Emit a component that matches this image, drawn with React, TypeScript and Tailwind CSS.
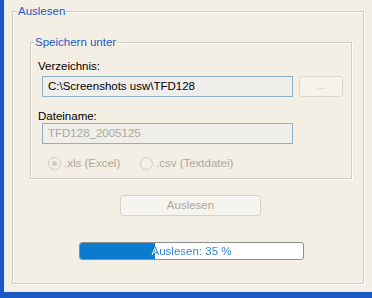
export default function App() {
  return (
    <div className="w-[372px] h-[298px] overflow-hidden bg-[#f4efe4] border-l-4 border-b-[6px] border-[#1a58c4] shadow-[inset_1px_-1px_0_#dfe6f2] pt-[5px] pl-[8px] font-['Liberation_Sans',Arial,sans-serif] text-[11.5px] leading-[13px] text-black">
      <fieldset className="w-[352px] h-[279px] border border-[#d0ccbf] shadow-[inset_1px_1px_0_#fff,1px_1px_0_#fff] p-0">
        <legend className="ml-[4px] px-[1px] bg-[#f4efe4] text-[#1d5bc6]">
          Auslesen
        </legend>

        <div className="pl-[17px]">
          <fieldset className="w-[322px] h-[143px] mt-[18px] border border-[#d0ccbf] shadow-[inset_1px_1px_0_#fff,1px_1px_0_#fff] p-0">
            <legend className="ml-[3px] px-[1px] bg-[#f4efe4] text-[#1d5bc6]">
              Speichern unter
            </legend>

            <div className="pl-[7px] pt-[11px]">
              <div>Verzeichnis:</div>
              <div className="flex mt-[3px] ml-[4px]">
                <div className="w-[251px] h-[21px] border border-[#8fb0c9] bg-[#efeeea] pl-[5px] flex items-center">
                  C:\Screenshots usw\TFD128
                </div>
                <div className="w-[44px] h-[21px] ml-[6px] rounded-[3px] border border-[#dcd8cb] bg-[#f5f3ec] text-[#c8c4b8] flex items-center justify-center pb-[3px]">
                  ...
                </div>
              </div>

              <div className="mt-[13px]">Dateiname:</div>
              <div className="w-[251px] h-[21px] ml-[4px] border border-[#8fb0c9] bg-[#efeeea] pl-[5px] flex items-center text-[#aca899]">
                TFD128_2005125
              </div>

              <div className="flex items-center mt-[13px] ml-[10px] text-[#aca899]">
                <div className="w-[92px] flex items-center">
                  <span className="w-[13px] h-[13px] rounded-full border border-[#cfccc0] bg-[#f3f1ea] flex items-center justify-center">
                    <span className="w-[5px] h-[5px] rounded-full bg-[#cfccc0]" />
                  </span>
                  <span className="ml-[3px]">.xls (Excel)</span>
                </div>
                <div className="flex items-center">
                  <span className="w-[13px] h-[13px] rounded-full border border-[#cfccc0] bg-[#f3f1ea]" />
                  <span className="ml-[3px]">.csv (Textdatei)</span>
                </div>
              </div>
            </div>
          </fieldset>

          <div className="w-[141px] h-[21px] mt-[16px] ml-[90px] rounded-[3px] border border-[#d6d2c4] bg-[#f6f4ee] text-[#aca899] flex items-center justify-center">
            Auslesen
          </div>

          <div className="relative w-[225px] h-[18px] mt-[26px] ml-[49px] rounded-[3px] border border-[#8d8f8f] bg-white overflow-hidden">
            <div className="absolute left-0 top-0 bottom-0 w-[75px] bg-[#0b7bd0]" />
            <div className="absolute inset-0 flex items-center justify-center">
              <span className="w-full text-center bg-[linear-gradient(90deg,#ffffff_0,#ffffff_75px,#2a80d2_75px)] bg-clip-text text-transparent">
                Auslesen: 35 %
              </span>
            </div>
          </div>
        </div>
      </fieldset>
    </div>
  );
}
